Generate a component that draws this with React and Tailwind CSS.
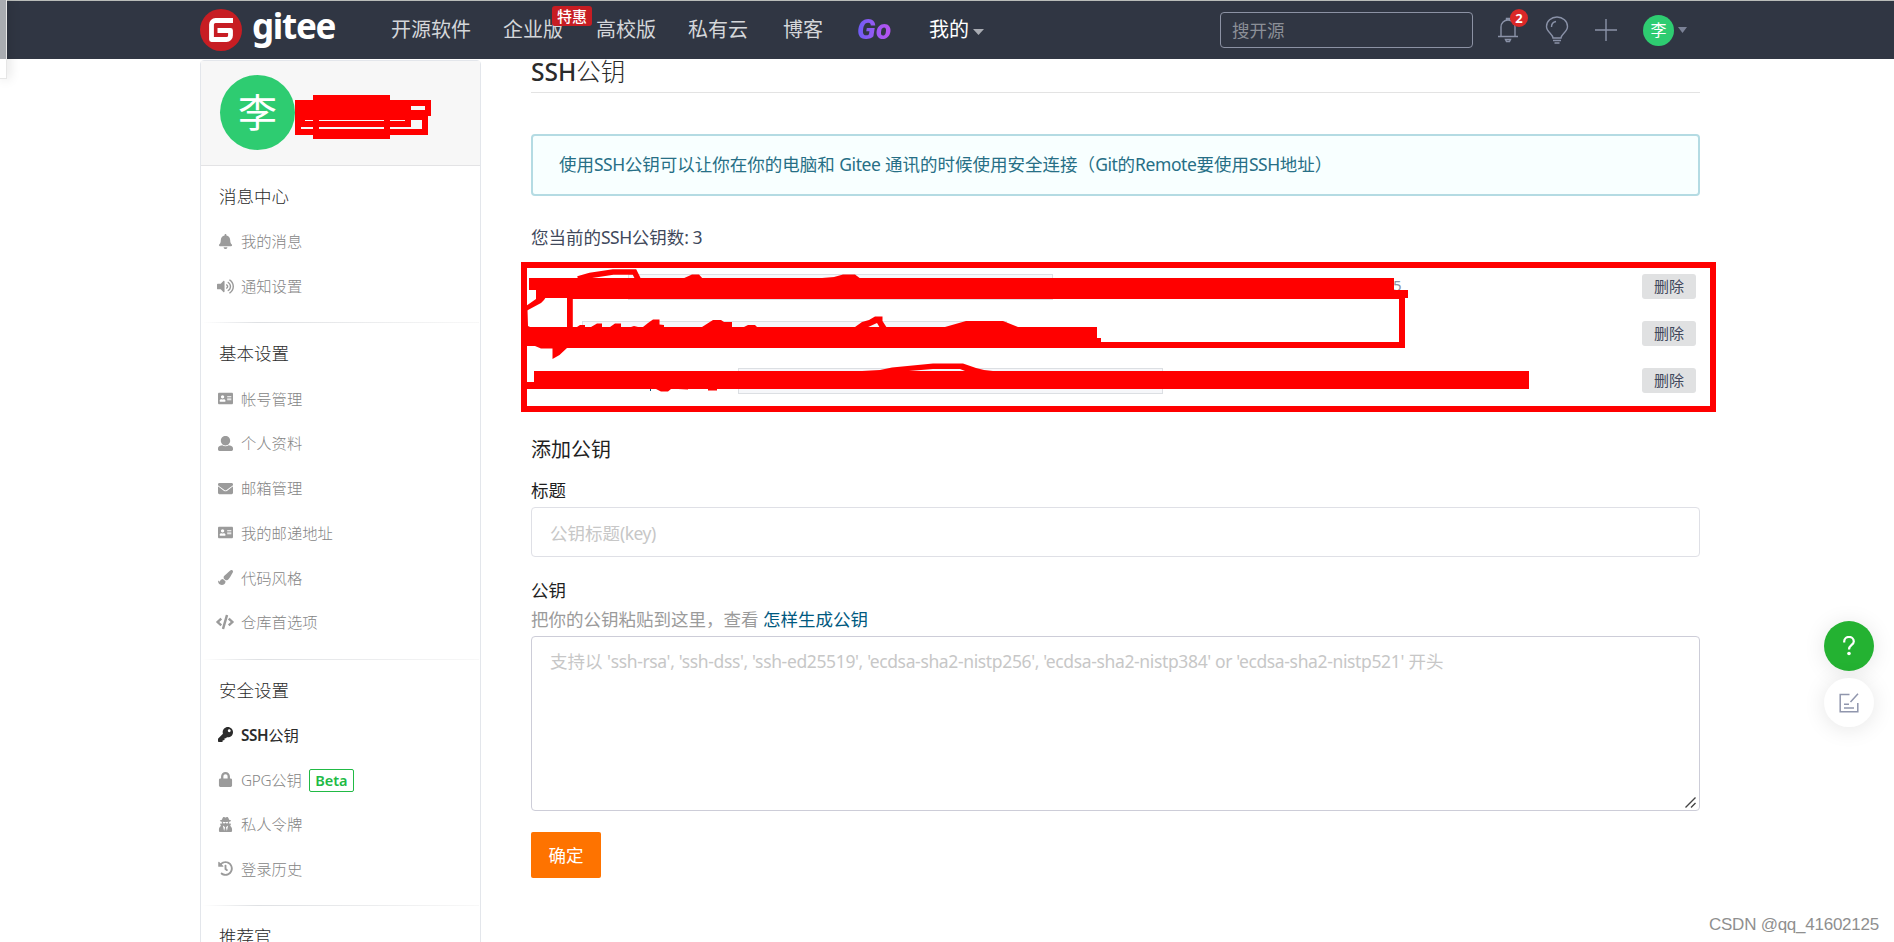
import React from "react";
import {
  FaBell,
  FaVolumeUp,
  FaAddressCard,
  FaEnvelope,
  FaPaintBrush,
  FaCode,
  FaKey,
  FaLock,
  FaUserSecret,
  FaHistory,
} from "react-icons/fa";

const UserIcon = ({ size }) => (
  <svg width={size} height={size} viewBox="0 0 512 512" fill="currentColor">
    <path d="M256 0c88.366 0 160 71.634 160 160s-71.634 160-160 160S96 248.366 96 160 167.634 0 256 0zm183.283 333.821l-71.313-17.828c-74.923 53.890-165.738 41.864-223.940 0l-71.313 17.828C29.981 344.505 0 382.903 0 426.955V464c0 26.510 21.490 48 48 48h416c26.510 0 48-21.490 48-48v-37.045c0-44.052-29.981-82.450-72.717-93.134z" />
  </svg>
);

const sections = [
  {
    title: "消息中心",
    items: [
      { label: "我的消息", icon: FaBell },
      { label: "通知设置", icon: FaVolumeUp, size: 17 },
    ],
  },
  {
    title: "基本设置",
    items: [
      { label: "帐号管理", icon: FaAddressCard },
      { label: "个人资料", icon: UserIcon },
      { label: "邮箱管理", icon: FaEnvelope },
      { label: "我的邮递地址", icon: FaAddressCard },
      { label: "代码风格", icon: FaPaintBrush },
      { label: "仓库首选项", icon: FaCode, size: 18 },
    ],
  },
  {
    title: "安全设置",
    items: [
      { label: "公钥", prefix: "SSH", icon: FaKey, active: true },
      { label: "公钥", prefix: "GPG", icon: FaLock, beta: true },
      { label: "私人令牌", icon: FaUserSecret },
      { label: "登录历史", icon: FaHistory },
    ],
  },
  { title: "推荐官", items: [] },
];

// left offset and width of the fingerprint box in each row
const keys = [
  { box: "ml-[97px] w-[425px]", tail: "5" },
  { box: "ml-[51px] w-[425px]" },
  { box: "ml-[207px] w-[425px]" },
];

const Logo = () => (
  <div className="flex items-center w-[191px] shrink-0">
    <svg width="42" height="42" viewBox="0 0 42 42" className="shrink-0">
      <circle cx="21" cy="21" r="21" fill="#c71d23" />
      <path
        d="M33 11.500H15.500a4 4 0 0 0-4 4V30.500H26.500a4 4 0 0 0 4-4V21.500H17.500"
        fill="none"
        stroke="#fff"
        strokeWidth="4.800"
        strokeLinejoin="round"
      />
    </svg>
    <span className="ml-[10px] -mt-[8px] text-[35px] leading-[42px] font-bold text-white tracking-[-1.3px]">
      gitee
    </span>
  </div>
);

const Header = () => (
  <header className="h-[59px] shrink-0 border-t border-[#b9bcb9] bg-[#303643] flex items-center pl-[200px] text-xl text-[#d4d6da]">
    <Logo />
    <nav className="flex items-center w-[829px] h-[58px] shrink-0 leading-[60px] whitespace-nowrap">
      <span className="w-[112px]">开源软件</span>
      <span className="w-[93px] relative">
        企业版
        <span className="absolute left-[49px] top-[6px] w-[40px] h-5 rounded-[3px] bg-[#c71d23] text-white text-[15px] leading-5 font-medium text-center">
          特惠
        </span>
      </span>
      <span className="w-[92px]">高校版</span>
      <span className="w-[95px]">私有云</span>
      <span className="w-[74px]">博客</span>
      <span className="w-[72px] h-[58px]">
        <span className="inline-block pr-1 font-['Roboto','Noto_Sans',sans-serif] text-[28px] leading-[58px] font-black italic tracking-[0.5px] bg-gradient-to-r from-[#6c5cf5] to-[#c44ff0] bg-clip-text text-transparent">
          Go
        </span>
      </span>
      <span className="text-white flex items-center">
        我的
        <svg width="11" height="6" viewBox="0 0 11 6" className="ml-[4px] mt-[4px]">
          <path d="M0 0h11L5.500 6z" fill="#a9acb3" />
        </svg>
      </span>
    </nav>
    <div className="w-[253px] h-9 shrink-0 border border-[#8c92a4] rounded-[4px] pl-[11px] text-[17.5px] leading-[34px] text-[#8b8f97]">
      搜开源
    </div>
    <div className="relative ml-[24px]">
      <svg width="22" height="26" viewBox="0 0 22 26" fill="none" stroke="#8a92a8" strokeWidth="1.400">
        <path d="M4 19.500V10a7 7 0 0 1 14 0v9.500M1 19.500h20M9.500 3V1.500h3V3M8.500 22.500h5l-1 2h-3z" />
      </svg>
      <span className="absolute left-[13px] -top-[8px] w-[18px] h-[18px] rounded-full bg-[#db2828] text-white text-[13px] leading-[18px] font-bold text-center">
        2
      </span>
    </div>
    <svg width="24" height="28" viewBox="0 0 24 28" className="ml-[26px]" fill="none" stroke="#8a92a8" strokeWidth="1.400">
      <path d="M8 22c0-4-6.500-6-6.500-11.500a10.500 9.500 0 0 1 21 0C22.500 16 16 18 16 22zM8 24.500h8M9.500 27h5M6.500 11c0-3 1.500-5 4.500-5.500" />
    </svg>
    <svg width="22" height="22" viewBox="0 0 22 22" className="ml-[26px]" stroke="#8a92a8" strokeWidth="1.400">
      <path d="M11 0v22M0 11h22" />
    </svg>
    <span className="ml-[26px] w-[31px] h-[31px] mt-px rounded-full bg-[#2ecc71] text-white text-base leading-[31px] text-center">
      李
    </span>
    <svg width="9" height="6" viewBox="0 0 9 6" className="ml-[4px]">
      <path d="M0 0h9L4.500 6z" fill="#7b8296" />
    </svg>
  </header>
);

const Sidebar = () => (
  <aside className="w-[281px] shrink-0 mt-px border border-[#e3e6eb] rounded-t-[4px] self-start">
    <div className="h-[105px] bg-[#f7f7f7] border-b border-[#e3e3e5] pl-[19px] pt-[14px]">
      <div className="w-[75px] h-[75px] rounded-full bg-[#2ecc71] text-white text-[39px] leading-[74px] text-center">
        李
      </div>
    </div>
    {sections.map(({ title, items }, i) => (
      <div key={title}>
        {i > 0 && <div className="h-px mx-px bg-gradient-to-r from-white via-[#dfe1e4] via-20% to-[#f8f8f8]" />}
        <h3 className="pl-[18px] pt-[7px] h-[53px] text-[17.5px] leading-[46px] text-[#2b2b2b] font-light">
          {title}
        </h3>
        {items.map(({ label, prefix, icon: Icon, size = 15, active, beta }) => (
          <div
            key={prefix ? prefix + label : label}
            className={
              active
                ? "h-[44.7px] pl-[15px] flex items-center text-[15.3px] text-[#2b2b2b]"
                : "h-[44.7px] pl-[15px] flex items-center text-[15.3px] text-[#858585] font-light"
            }
          >
            <span className={active ? "w-[18px] flex justify-center" : "w-[18px] flex justify-center text-[#9b9b9b]"}>
              <Icon size={size} className="shrink-0" />
            </span>
            <span className="ml-[7px] mt-px whitespace-nowrap">
              {prefix && (
                <span className={active ? "font-semibold tracking-[-0.4px]" : "tracking-[-0.3px]"}>{prefix}</span>
              )}
              {label}
            </span>
            {beta && (
              <span className="ml-[7px] mt-px w-[45px] h-[23px] border border-[#21ba45] rounded-[2px] text-[#21ba45] font-semibold text-[14.5px] leading-[21px] text-center">
                Beta
              </span>
            )}
          </div>
        ))}
        <div className="h-[14px]" />
      </div>
    ))}
  </aside>
);

const KeyForm = () => (
  <form>
    <h3 className="mt-[24px] text-xl leading-[26px] text-[#1f1f1f]">添加公钥</h3>
    <label className="block mt-[15px] text-[17.5px] leading-6 text-[#1f1f1f]">标题</label>
    <div className="mt-[5px] h-[50px] border border-[#dfe0e6] rounded-[4px] pl-[18px] text-[17.5px] leading-[50px] text-[#c7c7c7]">
      公钥标题<span className="tracking-[-0.5px]">(key)</span>
    </div>
    <label className="block mt-[21px] text-[17.5px] leading-6 text-[#1f1f1f]">公钥</label>
    <p className="mt-[5px] text-[17.5px] leading-6 text-[#9b9b9b]">
      把你的公钥粘贴到这里，查看 <a className="text-[#005980]">怎样生成公钥</a>
    </p>
    <div className="relative mt-[5px] h-[175px] border border-[#cdcdd8] rounded-[4px] pl-[18px] pt-[12px] text-[17.5px] leading-6 text-[#c7c7c7]">
      支持以{" "}
      <span className="tracking-[-0.36px]">
        'ssh-rsa', 'ssh-dss', 'ssh-ed25519', 'ecdsa-sha2-nistp256', 'ecdsa-sha2-nistp384' or 'ecdsa-sha2-nistp521'
      </span>{" "}
      开头
      <svg width="11" height="11" viewBox="0 0 11 11" className="absolute right-[3px] bottom-[2px]" stroke="#444" strokeWidth="1.400">
        <path d="M.5 10.500l10-10M6 10.500L10.500 6" />
      </svg>
    </div>
    <button type="button" className="block mt-[21px] w-[70px] h-[46px] rounded-[2px] bg-[#fe7300] text-white text-[17.5px]">
      确定
    </button>
  </form>
);

const Main = () => (
  <main className="ml-[50px] w-[1169px] shrink-0">
    <h1 className="h-[34px] border-b border-[#e3e3e3] text-[24.5px] leading-[25px] text-[#2b2b2b]">
      <span className="font-medium">SSH</span>
      <span className="font-light">公钥</span>
    </h1>
    <div className="mt-[41px] h-[62px] border-2 border-[#b4dbe3] rounded-[4px] bg-[#f8ffff] pl-[26px] text-[17.5px] leading-[57px] text-[#276f86]">
      使用<span className="tracking-[-0.5px]">SSH</span>公钥可以让你在你的电脑和{" "}
      <span className="tracking-[-0.4px]">Gitee</span> 通讯的时候使用安全连接（
      <span className="tracking-[-0.4px]">Git</span>的<span className="tracking-[-0.4px]">Remote</span>要使用
      <span className="tracking-[-0.5px]">SSH</span>地址）
    </div>
    <p className="mt-[28px] text-[17.5px] leading-[26px] text-[#40485b]">
      您当前的<span className="tracking-[-0.5px]">SSH</span>公钥数
      <span className="tracking-[-0.5px]">: 3</span>
    </p>
    <div className="relative mt-[24px] h-[139px]">
      {keys.map(({ box, tail }, i) => (
        <div key={i} className="h-[47px] flex items-start">
          <div className={`${box} h-[26px] shrink-0 border border-[#dcdfe3] bg-[#f6f7fa]`} />
          {tail && <span className="ml-[340px] text-[15px] leading-[22px] text-[#8c92a4]">{tail}</span>}
          <button className="ml-auto mr-[4px] w-[54px] h-[25px] rounded-[3px] bg-[#e0e1e2] text-[15px] leading-[25px] text-[#40485b]">
            删除
          </button>
        </div>
      ))}
      {/* marker strokes over the keys, drawn in page units */}
      <svg className="absolute -left-[11px] -top-[13px]" width="1197" height="152" viewBox="520 261 1197 152" fill="#f00">
        <path d="M524 265H1713V409H524z" fill="none" stroke="#f00" strokeWidth="6" />
        <path d="M529 278H1394V290H1408V298H1405V348H567V298H536V290H529z M572.800 299V342H1399V299z" fillRule="evenodd" />
        <path d="M530 327H1097V338H1101V343H1399V348H567L559.500 355 552.500 359V348.500H541L535 346H526V310H527.500L528 326z" />
        <path d="M534 371H1529V389H526V382H534z" />
        <path d="M536 297H546L544 300 541 303 528 310 526 311V306L536 299z" />
        <path d="M578 279L590 275.500 600 274 613 272H634.500L638 279" fill="none" stroke="#f00" strokeWidth="5.500" />
        <path d="M682 279L692 274.500H699L703 279zM822 277.500L834 277 843 274.500H855L861 279z" />
        <path d="M577 327L580 325H585V327zM591 327L597 323.500H602V327zM610 327L615 323.500H621V327zM631 327H638L634 326zM643 327L648 323 653 319.500H659.500V324.500L664 325V327zM702 327L713 320H721L724 322H732V327zM744 327L748 325H755L757 327z" />
        <path d="M855 327L862 322 869 320 875 316.500H882.500V321L887 328H880L877 323 866 328z" />
        <path d="M945 327L966 321H1003L1018 327z" />
        <path d="M862 371L880 370 892 367.500 933 363.500H963L976 368 984 370 993 371H965L960 369H933L909 371z" />
        <path d="M656 389L661 391.500H668L671 389zM678 389H688V389.500zM708 389V390.500H717V389z" />
        <path d="M650 389h1v2h-1z" fill="#005980" />
      </svg>
    </div>
    <KeyForm />
  </main>
);

export default function App() {
  return (
    <div className="relative w-[1894px] h-[942px] overflow-hidden bg-white flex flex-col font-['Noto_Sans','Noto_Sans_CJK_SC',sans-serif]">
      <Header />
      <div className="flex pl-[200px] h-[883px]">
        <Sidebar />
        <Main />
      </div>

      {/* scribble over the user name */}
      <svg className="absolute left-[295px] top-[95px]" width="136" height="44" viewBox="295 95 136 44" fill="#f00" shapeRendering="crispEdges">
        <path
          fillRule="evenodd"
          d="M295 100H313V95H390V100H431V116H428V135H390V139H313V135H295zM411 106H425V110H411zM305 120H313V121H305zM319 120H384V121H319zM390 120H405V121H390zM411 120H422V129H390V127H411zM301 127H313V129H301zM319 127H384V129H319z"
        />
      </svg>

      <div className="absolute left-0 top-0 w-[7px] h-[79px] shadow-[2px_0_12px_rgba(0,0,0,0.14)] flex flex-col border-r border-b border-[#e6e6e6]">
        <div className="h-[59px] bg-[#a9acb1]" />
        <div className="flex-1 bg-white" />
      </div>

      <div className="absolute left-[1824px] top-[621px] flex flex-col gap-[7px]">
        <div className="w-[50px] h-[50px] rounded-full bg-[#24b232] shadow-[0_2px_22px_rgba(0,0,0,0.1)] flex items-center justify-center">
          <svg width="12" height="20" viewBox="0 0 12 20" fill="none" stroke="#fff" strokeWidth="2.200">
            <path d="M1.200 6.500V5.500A4.700 4.500 0 0 1 10.800 5.500C10.800 9 6 9 6 13.500" />
            <circle cx="6" cy="17.500" r="1.800" fill="#fff" stroke="none" />
          </svg>
        </div>
        <div className="w-[50px] h-[49px] rounded-full bg-white shadow-[0_2px_22px_rgba(0,0,0,0.1)] flex items-center justify-center">
          <svg width="20" height="20" viewBox="0 0 20 20" fill="none" stroke="#9096ad" strokeWidth="1.500">
            <path d="M10.500 1.500H1.200V18.800H18.800V10M19 .8L11.500 9M5 11.200H10M5 15H15" />
          </svg>
        </div>
      </div>

      <div className="absolute left-[1709px] top-[914px] text-[17px] leading-[22px] tracking-[-0.25px] text-[#8f8f8f] whitespace-nowrap font-['Liberation_Sans',sans-serif]">
        CSDN @qq_41602125
      </div>
    </div>
  );
}
